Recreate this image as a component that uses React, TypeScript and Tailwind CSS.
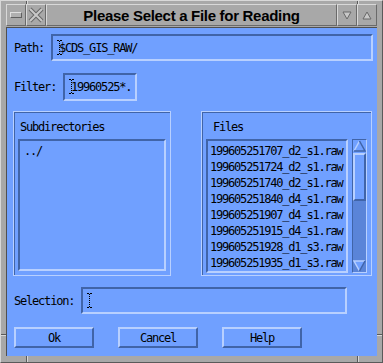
import React from 'react';

const mono = "font-['DejaVu_Sans_Mono',monospace] text-[12px] tracking-[-1.2px] text-black leading-none";
const raised = 'border-2 border-t-[#b8d0ff] border-l-[#b8d0ff] border-b-[#4064a8] border-r-[#4064a8]';
const sunken = 'border-2 border-t-[#4064a8] border-l-[#4064a8] border-b-[#b8d0ff] border-r-[#b8d0ff]';
const greyRaised = 'border border-t-[#d8d8d8] border-l-[#d8d8d8] border-b-[#6a6a6a] border-r-[#6a6a6a]';

const files = [
  '199605251707_d2_s1.raw',
  '199605251724_d2_s1.raw',
  '199605251740_d2_s1.raw',
  '199605251840_d4_s1.raw',
  '199605251907_d4_s1.raw',
  '199605251915_d4_s1.raw',
  '199605251928_d1_s3.raw',
  '199605251935_d1_s3.raw',
];

function Cursor() {
  return (
    <svg width="5" height="15" viewBox="0 0 5 15" className="shrink-0">
      <path d="M0 0.5h2M3 0.5h2M0 14.5h2M3 14.5h2" stroke="#000" strokeWidth="1" />
      <path d="M2.5 1v13" stroke="#000" strokeWidth="1" strokeDasharray="1 1" />
    </svg>
  );
}

function Field({ value, className }: { value: string; className: string }) {
  return (
    <div className={`${sunken} h-[27px] flex items-center pl-[4px] ${className}`}>
      <Cursor />
      <span className={`${mono} -ml-[3px]`}>{value}</span>
    </div>
  );
}

function Arrow({ up }: { up?: boolean }) {
  return (
    <svg width="13" height="12" viewBox="0 0 13 12" className="shrink-0">
      {up ? (
        <>
          <polygon points="6.5,1 12,11 1,11" fill="#70a0ff" />
          <path d="M1 11L6.5 1" stroke="#b8d0ff" strokeWidth="1.5" />
          <path d="M6.5 1L12 11H1" stroke="#4064a8" strokeWidth="1.5" fill="none" />
        </>
      ) : (
        <>
          <polygon points="1,1 12,1 6.5,11" fill="#70a0ff" />
          <path d="M6.5 11L1 1H12" stroke="#b8d0ff" strokeWidth="1.5" fill="none" />
          <path d="M12 1L6.5 11" stroke="#4064a8" strokeWidth="1.5" />
        </>
      )}
    </svg>
  );
}

function Button({ label }: { label: string }) {
  return (
    <div className={`${raised} w-[80px] h-[21px] flex items-center justify-center`}>
      <span className={mono}>{label}</span>
    </div>
  );
}

export default function App() {
  return (
    <div className="relative w-[383px] h-[363px] bg-[#a8a8a8] border-t border-l border-t-[#d8d8d8] border-l-[#d8d8d8] border-b border-r border-b-[#5a5a5a] border-r-[#5a5a5a] pt-[3px] px-[5px] pb-[6px] flex flex-col">
      {/* frame resize-corner notches */}
      <span className="absolute left-[25px] top-0 w-[2px] h-[3px] border-l border-l-[#5a5a5a] border-r border-r-[#d8d8d8]" />
      <span className="absolute left-[356px] top-0 w-[2px] h-[3px] border-l border-l-[#5a5a5a] border-r border-r-[#d8d8d8]" />
      <span className="absolute left-[25px] bottom-0 w-[2px] h-[6px] border-l border-l-[#5a5a5a] border-r border-r-[#d8d8d8]" />
      <span className="absolute left-[356px] bottom-0 w-[2px] h-[6px] border-l border-l-[#5a5a5a] border-r border-r-[#d8d8d8]" />
      <span className="absolute left-0 top-[333px] w-[5px] h-[2px] border-t border-t-[#5a5a5a] border-b border-b-[#d8d8d8]" />
      <span className="absolute right-0 top-[333px] w-[5px] h-[2px] border-t border-t-[#5a5a5a] border-b border-b-[#d8d8d8]" />

      {/* Title bar */}
      <div className="h-[22px] flex">
        <div className={`${greyRaised} w-[20px] h-full flex items-center justify-center`}>
          <div className="w-[12px] h-[6px] border border-t-[#e0e0e0] border-l-[#e0e0e0] border-b-[#606060] border-r-[#606060] bg-[#b0b0b0]" />
        </div>
        <div className={`${greyRaised} w-[20px] h-full flex items-center justify-center`}>
          <svg width="16" height="16" viewBox="0 0 16 16">
            <path d="M2 2L14 14M14 2L2 14" stroke="#686868" strokeWidth="4" />
            <path d="M2 2L14 14M14 2L2 14" stroke="#c8c8c8" strokeWidth="2" />
          </svg>
        </div>
        <div className={`${greyRaised} flex-1 h-full flex items-center justify-center`}>
          <span className="font-['Liberation_Sans',Arial,sans-serif] font-bold text-[15px] tracking-[-0.3px] text-black leading-none">
            Please Select a File for Reading
          </span>
        </div>
        <div className={`${greyRaised} w-[20px] h-full flex items-center justify-center`}>
          <svg width="10" height="9" viewBox="0 0 10 9">
            <path d="M1 1H9L5 8Z" stroke="#686868" strokeWidth="1" fill="#c8c8c8" />
          </svg>
        </div>
        <div className={`${greyRaised} w-[20px] h-full flex items-center justify-center`}>
          <svg width="10" height="9" viewBox="0 0 10 9">
            <path d="M1 8H9L5 1Z" stroke="#686868" strokeWidth="1" fill="#c8c8c8" />
          </svg>
        </div>
      </div>

      {/* Content */}
      <div className="mt-[1px] flex-1 bg-[#70a0ff] border-t border-l border-t-[#505050] border-l-[#505050] pl-[7px] pr-[4px] pt-[6px] flex flex-col">
        <div className="flex items-center h-[27px]">
          <span className={`${mono} w-[37px]`}>Path:</span>
          <Field value="$CDS_GIS_RAW/" className="flex-1" />
        </div>
        <div className="flex items-center h-[27px] mt-[12px]">
          <span className={`${mono} w-[49px]`}>Filter:</span>
          <Field value="19960525*." className="w-[74px] h-[28px]" />
        </div>

        <div className="flex mt-[11px] h-[165px] -ml-[1px]">
          {/* Subdirectories */}
          <div className="w-[158px] h-full border border-[#b8d0ff] shadow-[inset_1px_1px_0_#4064a8] flex flex-col px-[4px] pb-[4px]">
            <span className={`${mono} mt-[9px] ml-[2px]`}>Subdirectories</span>
            <div className={`${sunken} flex-1 mt-[6px] pt-[4px] pl-[4px] flex flex-col`}>
              <span className={mono}>../</span>
            </div>
          </div>

          {/* Files */}
          <div className="ml-[30px] w-[171px] h-full border border-[#b8d0ff] shadow-[inset_1px_1px_0_#4064a8] flex flex-col px-[4px] pb-[4px]">
            <span className={`${mono} mt-[9px] ml-[7px]`}>Files</span>
            <div className="flex-1 mt-[6px] flex gap-[4px]">
              <div className={`${sunken} flex-1 pt-[2px] pl-[2px] flex flex-col`}>
                {files.map((f) => (
                  <div key={f} className="h-[16px] flex items-center">
                    <span className={mono}>{f}</span>
                  </div>
                ))}
              </div>
              <div className="w-[15px] border border-t-[#4064a8] border-l-[#4064a8] border-b-[#b8d0ff] border-r-[#b8d0ff] bg-[#5a84d8] flex flex-col items-center">
                <div className="bg-[#70a0ff] w-full flex justify-center pb-[1px]">
                  <Arrow up />
                </div>
                <div className={`${raised} bg-[#70a0ff] w-full h-[48px]`} />
                <div className="flex-1" />
                <div className="w-full flex justify-center pt-[1px]">
                  <Arrow />
                </div>
              </div>
            </div>
          </div>
        </div>

        <div className="flex items-center h-[27px] mt-[11px]">
          <span className={`${mono} w-[67px]`}>Selection:</span>
          <Field value="" className="w-[266px]" />
        </div>

        <div className="flex gap-[24px] mt-[13px]">
          <Button label="Ok" />
          <Button label="Cancel" />
          <Button label="Help" />
        </div>
      </div>
    </div>
  );
}
